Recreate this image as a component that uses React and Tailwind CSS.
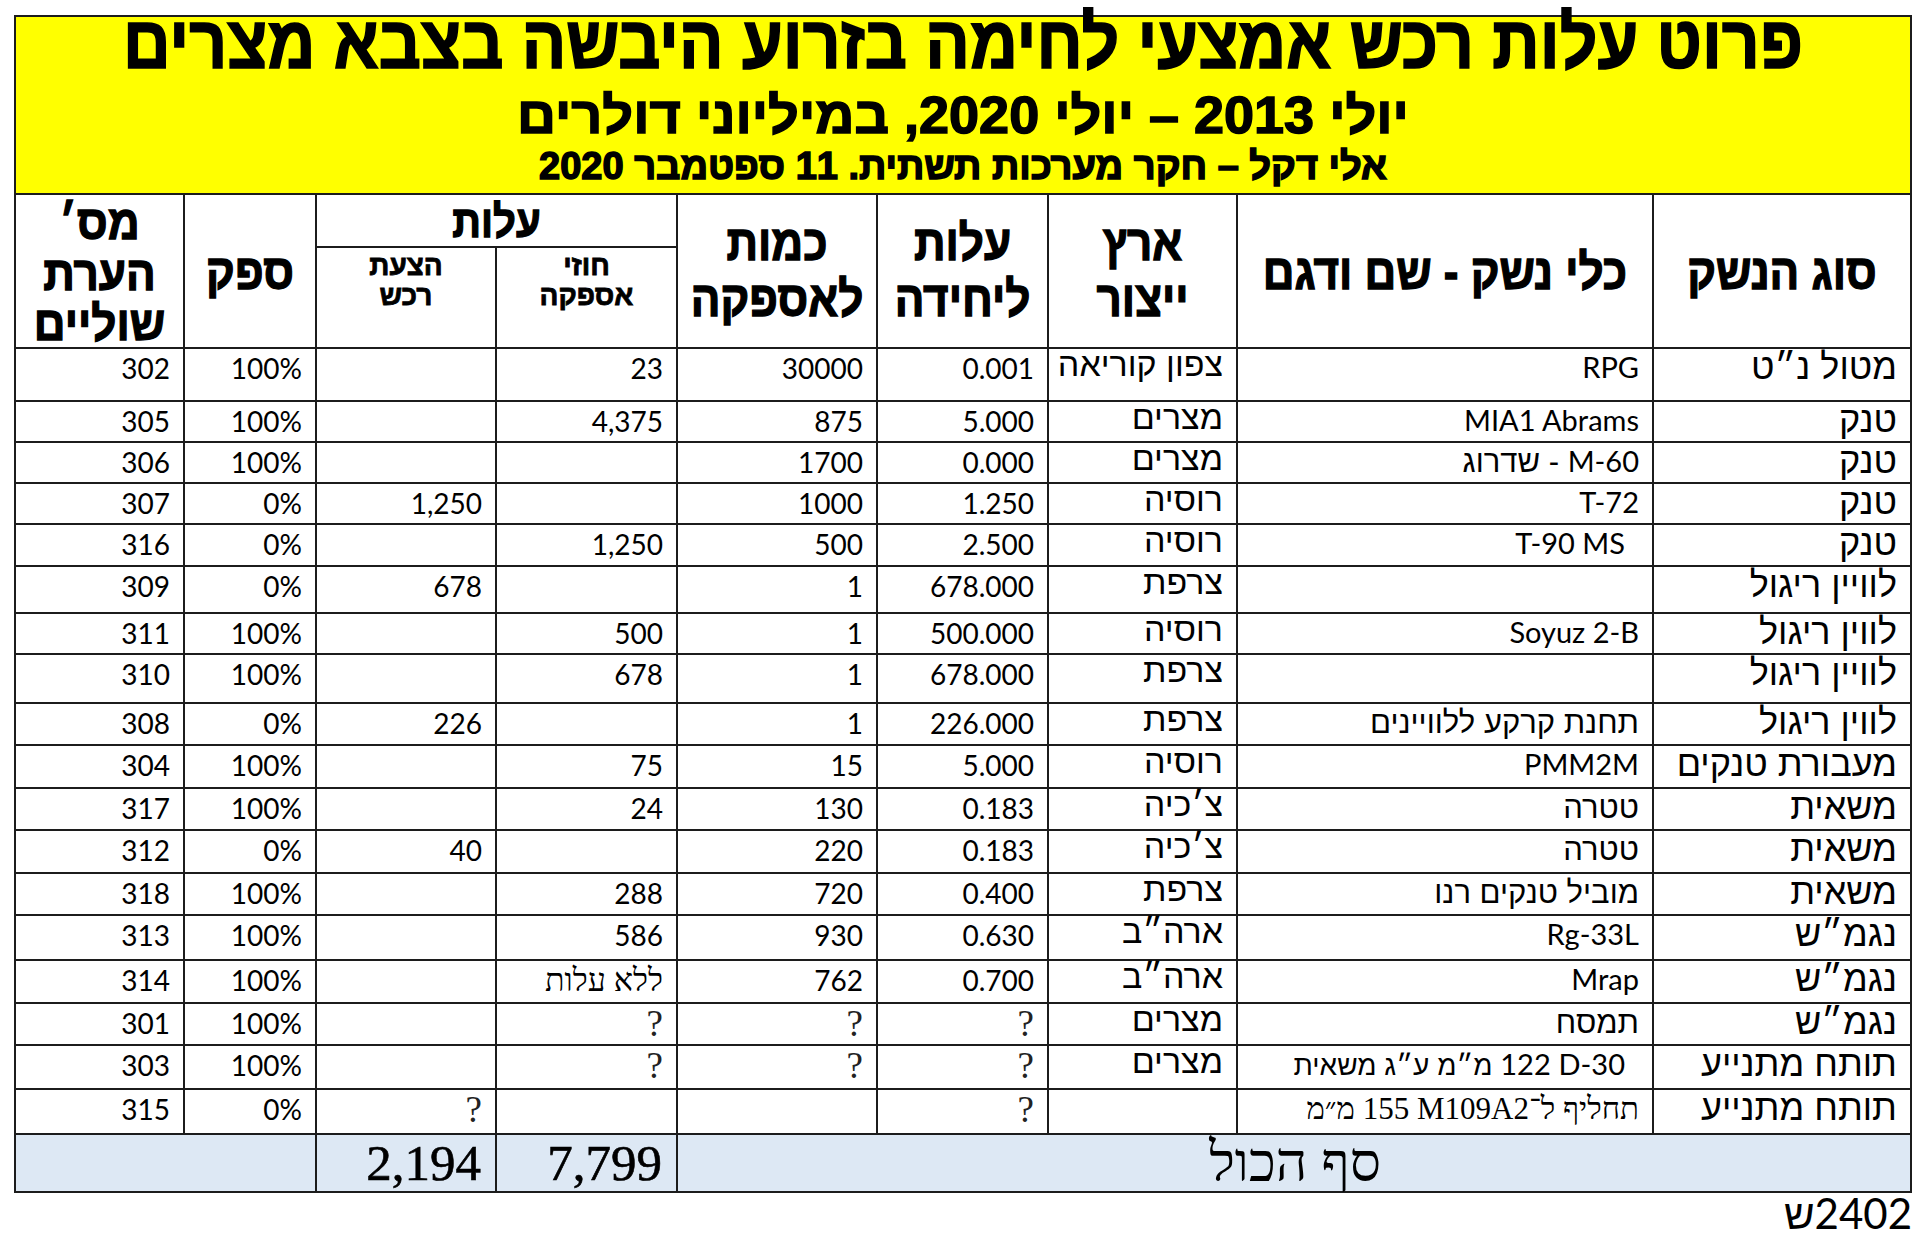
const HEAVY = "font-['Liberation_Sans','DejaVu_Sans',sans-serif] font-bold [-webkit-text-stroke:1.5px_#000]";
const NUM = "font-['Lato','Liberation_Sans',sans-serif] text-[28px] leading-[32px]";
const LAT = "font-['Lato','Liberation_Sans',sans-serif] text-[29px] leading-[32px]";
const HEB = "font-['Liberation_Sans','DejaVu_Sans',sans-serif] text-[31px] leading-[34px]";
const SERIF = "font-['Liberation_Serif','DejaVu_Serif',serif]";
const CELL = "border-2 border-[#1c1c1c] align-top pr-[13px] pl-1 text-right";
const TH = "border-2 border-[#1c1c1c] font-['Liberation_Sans','DejaVu_Sans',sans-serif] font-bold";

const rows = [
  { h: "h-[53px]", type: "מטול נ״ט", name: "RPG", country: "צפון קוריאה", unit: "0.001", qty: "30000", contract: "23", supply: "100%", note: "302" },
  { h: "h-[41px]", type: "טנק", name: "MIA1 Abrams", country: "מצרים", unit: "5.000", qty: "875", contract: "4,375", supply: "100%", note: "305" },
  { h: "h-[41px]", type: "טנק", name: "M-60 - שדרוג", country: "מצרים", unit: "0.000", qty: "1700", supply: "100%", note: "306" },
  { h: "h-[41px]", type: "טנק", name: "T-72", country: "רוסיה", unit: "1.250", qty: "1000", proposal: "1,250", supply: "0%", note: "307" },
  { h: "h-[42px]", type: "טנק", name: "T-90 MS", namePad: true, country: "רוסיה", unit: "2.500", qty: "500", contract: "1,250", supply: "0%", note: "316" },
  { h: "h-[47px]", type: "לוויין ריגול", name: "", country: "צרפת", unit: "678.000", qty: "1", proposal: "678", supply: "0%", note: "309" },
  { h: "h-[41px]", type: "לווין ריגול", name: "Soyuz 2-B", country: "רוסיה", unit: "500.000", qty: "1", contract: "500", supply: "100%", note: "311" },
  { h: "h-[49px]", type: "לוויין ריגול", name: "", country: "צרפת", unit: "678.000", qty: "1", contract: "678", supply: "100%", note: "310" },
  { h: "h-[42px]", type: "לווין ריגול", name: "תחנת קרקע ללוויינים", country: "צרפת", unit: "226.000", qty: "1", proposal: "226", supply: "0%", note: "308" },
  { h: "h-[43px]", type: "מעבורת טנקים", name: "PMM2M", country: "רוסיה", unit: "5.000", qty: "15", contract: "75", supply: "100%", note: "304" },
  { h: "h-[42px]", type: "משאית", name: "טטרה", country: "צ׳כיה", unit: "0.183", qty: "130", contract: "24", supply: "100%", note: "317" },
  { h: "h-[43px]", type: "משאית", name: "טטרה", country: "צ׳כיה", unit: "0.183", qty: "220", proposal: "40", supply: "0%", note: "312" },
  { h: "h-[42px]", type: "משאית", name: "מוביל טנקים רנו", country: "צרפת", unit: "0.400", qty: "720", contract: "288", supply: "100%", note: "318" },
  { h: "h-[45px]", type: "נגמ״ש", name: "Rg-33L", country: "ארה״ב", unit: "0.630", qty: "930", contract: "586", supply: "100%", note: "313" },
  { h: "h-[43px]", type: "נגמ״ש", name: "Mrap", country: "ארה״ב", unit: "0.700", qty: "762", contract: "ללא עלות", supply: "100%", note: "314" },
  { h: "h-[42px]", type: "נגמ״ש", name: "תמסח", country: "מצרים", unit: "?", qty: "?", contract: "?", supply: "100%", note: "301" },
  { h: "h-[44px]", type: "תותח מתנייע", name: "D-30", namePad: true, country: "מצרים", unit: "?", qty: "?", contract: "?", supply: "100%", note: "303" },
  { h: "h-[45px]", type: "תותח מתנייע", name: "תחליף ל־M109A2\u200F 155 מ״מ", nameSerif: true, country: "", unit: "?", qty: "", proposal: "?", supply: "0%", note: "315" },
];

const hasHebrew = (s) => /[\u0590-\u05FF]/.test(s);

function Val({ text }) {
  if (!text) return null;
  if (text === "?") return <span className={`${SERIF} text-[37px] leading-[34px] text-[#222]`}>?</span>;
  if (text === "ללא עלות") return <span className={`${SERIF} text-[32px] leading-[32px]`}>{text}</span>;
  return <span className={NUM}>{text}</span>;
}

function Name({ row }) {
  if (!row.name) return null;
  if (row.nameSerif) return <span className={`${SERIF} text-[31px] leading-[34px]`}>{row.name}</span>;
  if (row.name.startsWith("M-60")) {
    return (
      <span className={HEB}>
        <span className={LAT}>M-60</span> - שדרוג
      </span>
    );
  }
  if (row.name === "D-30") {
    return (
      <span className="font-['Liberation_Sans','DejaVu_Sans',sans-serif] text-[28px] leading-[34px]">
        <span className={LAT}>D-30</span>{"\u200F "}<span className={LAT}>122</span> מ״מ ע״ג משאית
      </span>
    );
  }
  return hasHebrew(row.name) ? <span className={HEB}>{row.name}</span> : <span className={LAT}>{row.name}</span>;
}

export default function App() {
  return (
    <div className="min-h-[1250px] w-[1920px] bg-white text-black">
      <div dir="rtl" className="ml-[14px] pt-[15px] w-[1898px]">
        <div className="h-[178px] border-2 border-b-0 border-[#1c1c1c] bg-[#ffff00] flex flex-col items-center">
          <div className={`${HEAVY} h-[74px] -mt-[12px] text-[66px] leading-[74px] scale-y-[1.12]`}>
            פרוט עלות רכש אמצעי לחימה בזרוע היבשה בצבא מצרים
          </div>
          <div className={`${HEAVY} h-[60px] mt-[6px] text-[54px] leading-[60px] scale-y-[0.95]`}>
            יולי 2013 – יולי 2020, במיליוני דולרים
          </div>
          <div className={`${HEAVY} h-[42px] text-[38px] leading-[42px]`}>
            אלי דקל – חקר מערכות תשתית. 11 ספטמבר 2020
          </div>
        </div>

        <table className="w-full table-fixed border-collapse">
          <colgroup>
            <col className="w-[258px]" />
            <col className="w-[416px]" />
            <col className="w-[189px]" />
            <col className="w-[171px]" />
            <col className="w-[200px]" />
            <col className="w-[181px]" />
            <col className="w-[180px]" />
            <col className="w-[132px]" />
            <col className="w-[169px]" />
          </colgroup>
          <thead>
            <tr className="h-[53px]">
              <th rowSpan={2} className={`${TH} text-[44px] leading-[47px]`}>
                <div className="scale-y-[1.12] [-webkit-text-stroke:1.2px_#000]">סוג הנשק</div>
              </th>
              <th rowSpan={2} className={`${TH} text-[44px] leading-[47px]`}>
                <div className="scale-y-[1.12] [-webkit-text-stroke:1.2px_#000]">כלי נשק - שם ודגם</div>
              </th>
              <th rowSpan={2} className={`${TH} text-[44px] leading-[50px]`}>
                <div className="scale-y-[1.12] [-webkit-text-stroke:1.2px_#000]">ארץ<br />ייצור</div>
              </th>
              <th rowSpan={2} className={`${TH} text-[44px] leading-[50px]`}>
                <div className="scale-y-[1.12] [-webkit-text-stroke:1.2px_#000]">עלות<br />ליחידה</div>
              </th>
              <th rowSpan={2} className={`${TH} text-[44px] leading-[50px]`}>
                <div className="scale-y-[1.12] [-webkit-text-stroke:1.2px_#000]">כמות<br />לאספקה</div>
              </th>
              <th colSpan={2} className={`${TH} text-[40px] leading-[44px]`}>
                <div className="scale-y-[1.12] [-webkit-text-stroke:1.2px_#000]">עלות</div>
              </th>
              <th rowSpan={2} className={`${TH} text-[44px] leading-[47px]`}>
                <div className="scale-y-[1.12] [-webkit-text-stroke:1.2px_#000]">ספק</div>
              </th>
              <th rowSpan={2} className={`${TH} text-[44px] leading-[46px] pt-1`}>
                <div className="scale-y-[1.1] [-webkit-text-stroke:1.2px_#000]">מס׳<br />הערת<br />שוליים</div>
              </th>
            </tr>
            <tr className="h-[101px]">
              <th className={`${TH} align-top pt-[3px] text-[28px] leading-[30px]`}>
                <div className="[-webkit-text-stroke:0.8px_#000]">חוזי<br />אספקה</div>
              </th>
              <th className={`${TH} align-top pt-[3px] text-[28px] leading-[30px]`}>
                <div className="[-webkit-text-stroke:0.8px_#000]">הצעת<br />רכש</div>
              </th>
            </tr>
          </thead>
          <tbody>
            {rows.map((r) => (
              <tr key={r.note} className={r.h}>
                <td className={`${CELL} pt-0`}>
                  <span className="font-['Liberation_Sans',sans-serif] text-[36px] leading-[36px]">{r.type}</span>
                </td>
                <td className={`${CELL} pt-[2px] ${r.namePad ? "pr-[27px]" : ""}`}>
                  <Name row={r} />
                </td>
                <td className={`${CELL} pt-0`}>
                  <span className="font-['Liberation_Sans',sans-serif] text-[34px] leading-[30px]">{r.country}</span>
                </td>
                <td className={`${CELL} pt-[3px]`}><Val text={r.unit} /></td>
                <td className={`${CELL} pt-[3px]`}><Val text={r.qty} /></td>
                <td className={`${CELL} pt-[3px]`}><Val text={r.contract} /></td>
                <td className={`${CELL} pt-[3px]`}><Val text={r.proposal} /></td>
                <td className={`${CELL} pt-[3px]`}><Val text={r.supply} /></td>
                <td className={`${CELL} pt-[3px]`}><Val text={r.note} /></td>
              </tr>
            ))}
            <tr className="h-[58px] bg-[#dde8f4]">
              <td colSpan={5} className={`border-2 border-[#1c1c1c] pr-[529px] text-right align-middle ${SERIF} text-[55px] leading-[52px]`}>סף הכול</td>
              <td className={`border-2 border-[#1c1c1c] pr-[14px] text-right align-middle ${SERIF} text-[51px] leading-[52px] [-webkit-text-stroke:0.6px_#000]`}>7,799</td>
              <td className={`border-2 border-[#1c1c1c] pr-[14px] text-right align-middle ${SERIF} text-[51px] leading-[52px] [-webkit-text-stroke:0.6px_#000]`}>2,194</td>
              <td colSpan={2} className="border-2 border-[#1c1c1c]"></td>
            </tr>
          </tbody>
        </table>

        <div dir="ltr" className="-mt-[2px] text-right font-['Lato','Liberation_Sans',sans-serif] text-[42px] leading-[44px]">{"ש\u200E2402"}</div>
      </div>
    </div>
  );
}
